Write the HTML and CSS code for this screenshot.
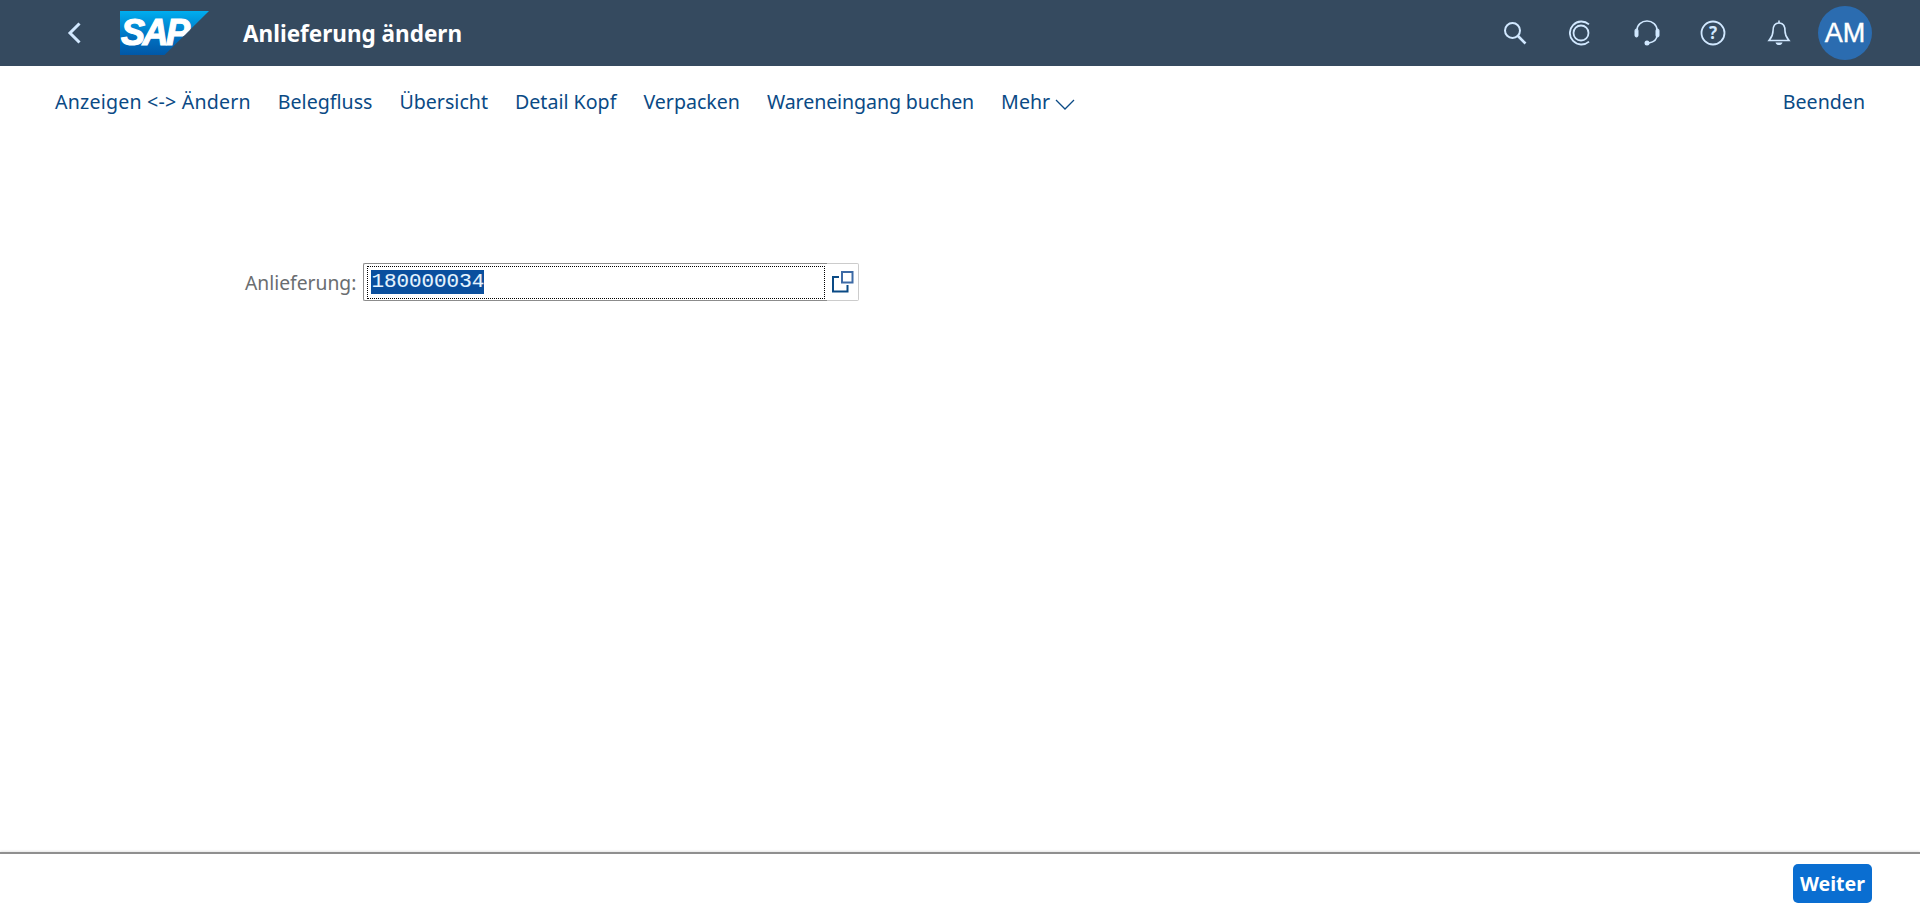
FILE: index.html
```html
<!DOCTYPE html>
<html lang="de">
<head>
  <meta charset="UTF-8">
  <title>Anlieferung ändern</title>
  <link rel="stylesheet" href="styles.css">
</head>
<body>

<div class="page">
  <!-- Shell header -->
  <header class="shell">
    <button class="shell-back" aria-label="Zurück">
      <svg width="16" height="22" viewBox="0 0 16 22"><path d="M13.5 1.5 L4 11 L13.5 20.5" fill="none" stroke="#d1e8ff" stroke-width="3"/></svg>
    </button>
    <div class="logo"><span class="logo-text">SAP</span></div>
    <h1 class="shell-title">Anlieferung ändern</h1>
    <div class="shell-icons">
      <span class="shell-icon">
        <svg width="24" height="24" viewBox="0 0 24 24" fill="none" stroke="#d1e8ff"><circle cx="9.5" cy="9.5" r="7.5" stroke-width="2"/><path d="M15 15 L22.5 22.5" stroke-width="2.6"/></svg>
      </span>
      <span class="shell-icon">
        <svg width="24" height="26" viewBox="0 0 24 26" fill="none" stroke="#d1e8ff" stroke-width="1.8"><path d="M20 4.4 A11.5 11.5 0 1 0 20 21.6"/><circle cx="12" cy="13" r="7.5"/></svg>
      </span>
      <span class="shell-icon">
        <svg width="26" height="26" viewBox="0 0 26 26" fill="none" stroke="#d1e8ff"><path d="M3 10 A10 9 0 0 1 23 10 V15 C23 20 20 22 15 23" stroke-width="1.6"/><rect x="1" y="9" width="3" height="8" rx="1.5" fill="#d1e8ff" stroke-width="1"/><rect x="22" y="9" width="3" height="8" rx="1.5" fill="#d1e8ff" stroke-width="1"/><circle cx="13" cy="23" r="2.5" fill="#d1e8ff" stroke="none"/></svg>
      </span>
      <span class="shell-icon">
        <svg width="26" height="26" viewBox="0 0 26 26"><circle cx="13" cy="13" r="11.5" fill="none" stroke="#d1e8ff" stroke-width="1.8"/><text x="13" y="19" class="help-mark">?</text></svg>
      </span>
      <span class="shell-icon">
        <svg width="24" height="26" viewBox="0 0 24 26" fill="none" stroke="#d1e8ff" stroke-width="1.6"><path d="M12 3 C7 3 6 7 6 11 C6 16 4 18 2 20.5 H22 C20 18 18 16 18 11 C18 7 17 3 12 3 Z"/><path d="M12 0.5 V3"/><path d="M8.5 22.5 H15.5 C15 24.5 13.5 25 12 25 C10.5 25 9 24.5 8.5 22.5 Z" fill="#d1e8ff" stroke="none"/></svg>
      </span>
    </div>
    <div class="avatar">AM</div>
  </header>

  <!-- Toolbar -->
  <nav class="toolbar">
    <a class="tool tool-wide">Anzeigen &lt;-&gt; Ändern</a>
    <a class="tool">Belegfluss</a>
    <a class="tool">Übersicht</a>
    <a class="tool">Detail Kopf</a>
    <a class="tool">Verpacken</a>
    <a class="tool tool-tight">Wareneingang buchen</a>
    <a class="tool">Mehr
      <svg class="tool-arrow" width="20" height="11" viewBox="0 0 20 11"><path d="M1 1 L10 10 L19 1" fill="none" stroke="#0a4a85" stroke-width="1.3"/></svg>
    </a>
    <a class="tool tool-end">Beenden</a>
  </nav>

  <!-- Entry form -->
  <main class="content">
    <div class="form-row">
      <label class="field-label">Anlieferung:</label>
      <div class="field">
        <div class="field-focus"><span class="field-value">180000034</span></div>
      </div>
      <div class="field-help">
        <svg width="22" height="22" viewBox="0 0 22 22" fill="none"><path d="M7 6 H1 V20.5 H15.5 V14" stroke="#0a4a85" stroke-width="2"/><rect x="10" y="1" width="10.5" height="10.5" stroke="#3d6aa5" stroke-width="2"/></svg>
      </div>
    </div>
  </main>

  <!-- Footer -->
  <footer class="footer">
    <button class="btn-primary">Weiter</button>
  </footer>
</div>

</body>
</html>
```

FILE: styles.css
```css
/* Global Styles */
html, body {
  height: 100%;
}

body {
  margin: 0;
  background: #fff;
  font-family: "Noto Sans", "Open Sans", sans-serif;
  overflow: hidden;
}

.page {
  display: flex;
  flex-direction: column;
  height: 100%;
}

/* Shell header */
.shell {
  display: flex;
  align-items: center;
  flex: 0 0 66px;
  background: #354a5f;
  padding-left: 66px;
  padding-right: 48px;
}

.shell-back {
  display: flex;
  padding: 0;
  margin-right: 38px;
  background: none;
  border: none;
}

.logo {
  flex: 0 0 89px;
  height: 44px;
  margin-right: 34px;
  background: linear-gradient(180deg, #00aeef 0%, #0070c0 60%, #0058a8 100%);
  clip-path: polygon(0 0, 100% 0, 50% 100%, 0 100%);
}

.logo-text {
  display: block;
  padding-left: 1px;
  color: #fff;
  font-family: "Liberation Sans", sans-serif;
  font-size: 36px;
  font-weight: 700;
  font-style: italic;
  line-height: 44px;
  letter-spacing: -2.5px;
  -webkit-text-stroke: 1.2px #fff;
}

.shell-title {
  margin: 0;
  color: #fff;
  font-size: 22.5px;
  font-weight: 700;
}

.shell-icons {
  display: flex;
  margin-left: auto;
  margin-right: 6px;
}

.shell-icon {
  display: flex;
  align-items: center;
  justify-content: center;
  width: 66px;
  height: 66px;
}

.help-mark {
  fill: #d1e8ff;
  font-size: 17px;
  font-weight: 700;
  text-anchor: middle;
}

.avatar {
  width: 54px;
  height: 54px;
  border-radius: 50%;
  background: #2b6cb0;
  color: #fff;
  font-family: "Liberation Sans", sans-serif;
  font-size: 27px;
  line-height: 54px;
  text-align: center;
  -webkit-text-stroke: 0.4px #fff;
}

/* Toolbar */
.toolbar {
  display: flex;
  align-items: center;
  gap: 27px;
  flex: 0 0 70px;
  padding: 0 55px;
}

.tool {
  color: #0a4a85;
  font-size: 19.6px;
  white-space: nowrap;
}

.tool-wide {
  letter-spacing: 0.2px;
}

.tool-tight {
  letter-spacing: -0.1px;
}

.tool-arrow {
  vertical-align: -1px;
}

.tool-end {
  margin-left: auto;
}

/* Entry form */
.content {
  flex: 1;
  padding: 127px 0 0 245px;
}

.form-row {
  display: flex;
  align-items: center;
}

.field-label {
  margin-right: 7px;
  color: #6a6d70;
  font-size: 19.3px;
}

.field {
  box-sizing: border-box;
  width: 464px;
  height: 38px;
  padding: 2px 2px 1px 3px;
  border: 1px solid #8c8c8c;
  border-right: none;
  border-radius: 2px 0 0 2px;
}

.field-focus {
  box-sizing: border-box;
  height: 100%;
  padding: 3px 0 0 3px;
  border: 1px dotted #000;
}

.field-value {
  display: inline-block;
  height: 24px;
  background: #0a4f9e;
  color: #e6f4ff;
  font-family: "Liberation Mono", monospace;
  font-size: 20.9px;
  line-height: 24px;
  -webkit-text-stroke: 0.1px #e6f4ff;
}

.field-help {
  box-sizing: border-box;
  display: flex;
  align-items: center;
  justify-content: center;
  width: 32px;
  height: 38px;
  border: 1px solid #ccc;
  border-left: none;
  border-radius: 0 2px 2px 0;
}

/* Footer */
.footer {
  display: flex;
  align-items: center;
  justify-content: flex-end;
  flex: 0 0 59px;
  padding-right: 48px;
  border-top: 2px solid #8f8f8f;
  box-shadow: 0 -1px 2px rgba(0, 0, 0, 0.1);
}

.btn-primary {
  width: 79px;
  height: 39px;
  padding: 0;
  background: #0a6ed1;
  color: #fff;
  border: none;
  border-radius: 5px;
  font-family: inherit;
  font-size: 19.6px;
  font-weight: 700;
}
```
